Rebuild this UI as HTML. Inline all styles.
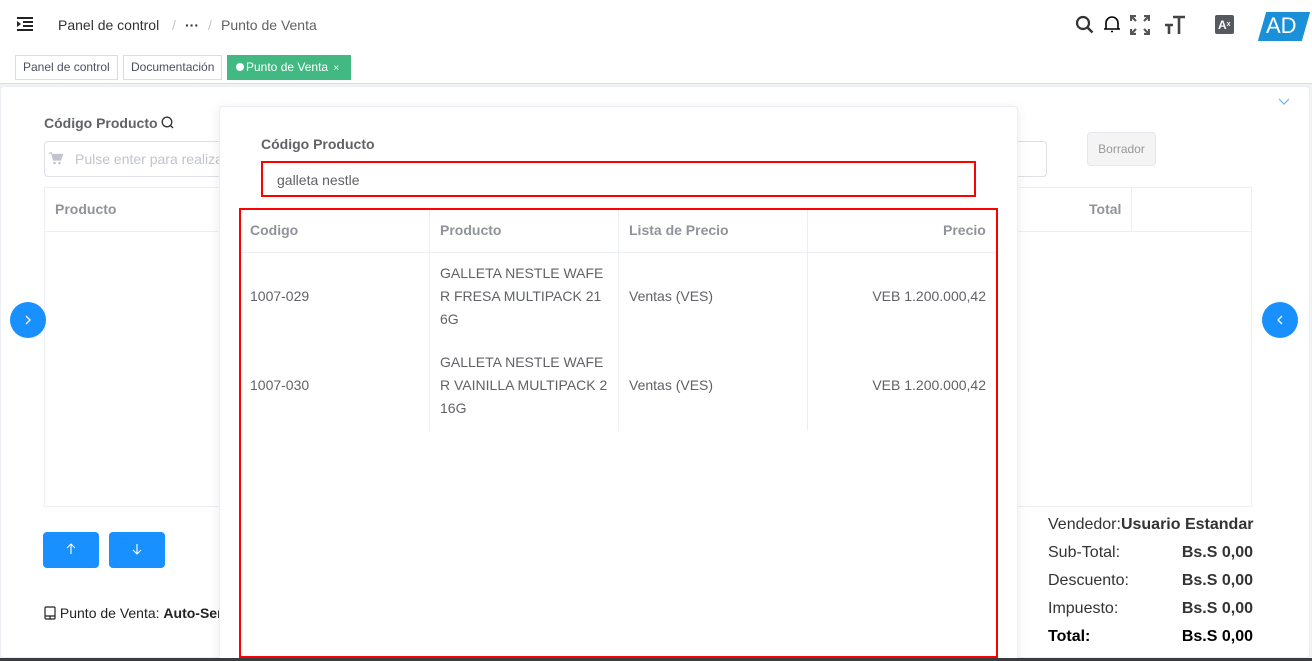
<!DOCTYPE html>
<html><head><meta charset="utf-8"><style>
*{box-sizing:border-box;margin:0;padding:0}
html,body{width:1312px;height:661px;overflow:hidden}
body{background:#f0f2f5;font-family:"Liberation Sans",sans-serif;color:#303133;position:relative}
.a{position:absolute}
.hdr{left:0;top:0;width:1312px;height:50px;background:#fff;box-shadow:0 1px 4px rgba(0,21,41,.08)}
.tags{left:0;top:50px;width:1312px;height:34px;background:#fff;border-bottom:1px solid #d8dce5}
.tag{top:55px;height:25px;border:1px solid #d8dce5;font-size:12px;line-height:23px;padding:0 7px;color:#495060;background:#fff}
.card{left:0;top:86px;width:1310px;height:572px;background:#fff;border:1px solid #ebeef5;border-radius:4px}
.th{font-weight:bold;color:#909399;font-size:14px}
.cell{font-size:14px;color:#606266;line-height:23px}
.vl{width:1px;background:#ebeef5}
.hl{height:1px;background:#ebeef5}
</style></head><body>
<div class="a hdr"></div>
<svg class="a" style="left:16px;top:16px" width="18" height="16" viewBox="0 0 18 16"><path d="M1 2h16M7 6h10M7 10h10M1 14h16" stroke="#222" stroke-width="2"/><path d="M1 5l4 3-4 3z" fill="#222"/></svg>
<div class="a" style="left:58px;top:17px;font-size:14px;color:#303133">Panel de control</div>
<div class="a" style="left:172px;top:17px;font-size:14px;color:#c0c4cc">/</div>
<div class="a" style="left:185px;top:17px;font-size:14px;font-weight:bold;color:#303133;line-height:16px">&middot;&middot;&middot;</div>
<div class="a" style="left:208px;top:17px;font-size:14px;color:#c0c4cc">/</div>
<div class="a" style="left:221px;top:17px;font-size:14px;color:#606266">Punto de Venta</div>
<svg class="a" style="left:1075px;top:15px" width="20" height="20" viewBox="0 0 20 20"><circle cx="8" cy="8" r="6" fill="none" stroke="#333" stroke-width="2.2"/><path d="M12.5 12.5l5 5" stroke="#333" stroke-width="2.5"/></svg>
<svg class="a" style="left:1103px;top:14px" width="18" height="20" viewBox="0 0 18 20"><path d="M3 15V9a6 6 0 0112 0v6zM1 15h16M8 17.5h2" fill="none" stroke="#000" stroke-width="1.6"/></svg>
<svg class="a" style="left:1130px;top:15px" width="20" height="20" viewBox="0 0 20 20" fill="none" stroke="#555" stroke-width="2.2"><path d="M1 6V1h5M1 1l5 5M19 6V1h-5M19 1l-5 5M1 14v5h5M1 19l5-5M19 14v5h-5M19 19l-5-5"/></svg>
<svg class="a" style="left:1164px;top:15px" width="22" height="20" viewBox="0 0 22 20"><path d="M9 2h12M15 2v17M1 10h8M5 10v9" stroke="#444" stroke-width="2.6"/></svg>
<div class="a" style="left:1215px;top:15px;width:19px;height:19px;background:#555a5f;border-radius:2px;color:#fff;font-size:12px;font-weight:bold;line-height:20px;padding-left:3px">A<span style="font-size:7px;vertical-align:top">x</span></div>
<div class="a" style="left:1262px;top:12px;width:44px;height:29px;background:#1a90d9;transform:skewX(-16deg)"></div>
<div class="a" style="left:1266px;top:13px;font-size:22px;color:#fff">AD</div>
<div class="a tags"></div>
<div class="a tag" style="left:15px">Panel de control</div>
<div class="a tag" style="left:123px">Documentación</div>
<div class="a tag" style="left:227px;width:124px;background:#42b983;border-color:#42b983;color:#fff;padding-left:8px"><span style="display:inline-block;width:8px;height:8px;border-radius:50%;background:#fff;margin-right:2px"></span>Punto de Venta <span style="font-size:10px;margin-left:2px">×</span></div>
<div class="a card"></div>
<svg class="a" style="left:1278px;top:98px" width="12" height="8" viewBox="0 0 12 8"><path d="M1 1l5 5 5-5" fill="none" stroke="#66b1ff" stroke-width="1.2"/></svg>
<div class="a" style="left:44px;top:115px;font-size:14px;font-weight:bold;color:#606266">Código Producto <svg width="13" height="13" viewBox="0 0 13 13" style="vertical-align:-1px"><circle cx="6" cy="6" r="4.8" fill="none" stroke="#333" stroke-width="1.3"/><path d="M9.5 9.5l2.5 2.5" stroke="#333" stroke-width="1.3"/></svg></div>
<div class="a" style="left:44px;top:141px;width:1003px;height:36px;border:1px solid #dcdfe6;border-radius:4px"></div>
<svg class="a" style="left:49px;top:152px" width="14" height="13" viewBox="0 0 14 13"><path d="M0 1h2.5l2 7h7l2-5.5H4" fill="#c0c4cc" stroke="#c0c4cc" stroke-width="1.2"/><circle cx="5.5" cy="11" r="1.3" fill="#c0c4cc"/><circle cx="10.5" cy="11" r="1.3" fill="#c0c4cc"/></svg>
<div class="a" style="left:75px;top:151px;font-size:14px;color:#c0c4cc">Pulse enter para realizar</div>
<div class="a" style="left:1087px;top:132px;width:69px;height:34px;border:1px solid #e4e7ed;border-radius:4px;background:#f4f4f5;color:#999;font-size:12px;line-height:32px;text-align:center">Borrador</div>
<div class="a" style="left:44px;top:187px;width:1208px;height:320px;border:1px solid #ebeef5"></div>
<div class="a hl" style="left:44px;top:231px;width:1208px"></div>
<div class="a vl" style="left:1131px;top:187px;height:44px"></div>
<div class="a th" style="left:55px;top:201px">Producto</div>
<div class="a th" style="left:1089px;top:201px">Total</div>
<div class="a" style="left:10px;top:302px;width:36px;height:36px;border-radius:50%;background:#1890ff"></div>
<svg class="a" style="left:23px;top:314px" width="10" height="12"><path d="M3 2l4 4-4 4" fill="none" stroke="#fff" stroke-width="1.3"/></svg>
<div class="a" style="left:1262px;top:302px;width:36px;height:36px;border-radius:50%;background:#1890ff"></div>
<svg class="a" style="left:1275px;top:314px" width="10" height="12"><path d="M7 2L3 6l4 4" fill="none" stroke="#fff" stroke-width="1.3"/></svg>
<div class="a" style="left:43px;top:532px;width:56px;height:36px;border-radius:4px;background:#1890ff"></div>
<svg class="a" style="left:65px;top:543px" width="12" height="12"><path d="M6 11V1M2 5l4-4 4 4" fill="none" stroke="#fff" stroke-width="1.1"/></svg>
<div class="a" style="left:109px;top:532px;width:56px;height:36px;border-radius:4px;background:#1890ff"></div>
<svg class="a" style="left:131px;top:543px" width="12" height="12"><path d="M6 1v10M2 7l4 4 4-4" fill="none" stroke="#fff" stroke-width="1.1"/></svg>
<div class="a" style="left:44px;top:605px;font-size:14px;color:#222;white-space:nowrap;width:175px;overflow:hidden"><svg width="12" height="14" viewBox="0 0 12 14" style="vertical-align:-2px"><rect x="1" y="1" width="10" height="12" rx="1" fill="none" stroke="#222" stroke-width="1.2"/><path d="M1 10h10M6 10v3" stroke="#222" stroke-width="1.2"/></svg> Punto de Venta: <b>Auto-Servicio</b></div>
<div class="a" style="left:1048px;top:511px;font-size:16px;color:#333;line-height:28px;width:205px;white-space:nowrap">
<div>Vendedor:<b>Usuario Estandar</b></div>
<div style="display:flex;justify-content:space-between"><span>Sub-Total:</span><b>Bs.S 0,00</b></div>
<div style="display:flex;justify-content:space-between"><span>Descuento:</span><b>Bs.S 0,00</b></div>
<div style="display:flex;justify-content:space-between"><span>Impuesto:</span><b>Bs.S 0,00</b></div>
<div style="display:flex;justify-content:space-between;color:#000"><b>Total:</b><b>Bs.S 0,00</b></div>
</div>
<!-- modal -->
<div class="a" style="left:219px;top:106px;width:799px;height:560px;background:#fff;border:1px solid #ebeef5;border-radius:4px;box-shadow:0 2px 12px rgba(0,0,0,.08)"></div>
<div class="a" style="left:261px;top:136px;font-size:14px;font-weight:bold;color:#606266">Código Producto</div>
<div class="a" style="left:261px;top:161px;width:715px;height:36px;border:2px solid #f00"></div>
<div class="a" style="left:277px;top:172px;font-size:14px;color:#606266">galleta nestle</div>
<div class="a" style="left:239px;top:208px;width:759px;height:450px;border:2px solid #f00"></div>
<div class="a hl" style="left:241px;top:252px;width:755px"></div>
<div class="a vl" style="left:429px;top:210px;height:221px"></div>
<div class="a vl" style="left:618px;top:210px;height:221px"></div>
<div class="a vl" style="left:807px;top:210px;height:221px"></div>
<div class="a th" style="left:250px;top:222px">Codigo</div>
<div class="a th" style="left:440px;top:222px">Producto</div>
<div class="a th" style="left:629px;top:222px">Lista de Precio</div>
<div class="a th" style="left:943px;top:222px">Precio</div>
<div class="a cell" style="left:250px;top:285px">1007-029</div>
<div class="a cell" style="left:440px;top:262px;width:170px">GALLETA NESTLE WAFE<br>R FRESA MULTIPACK 21<br>6G</div>
<div class="a cell" style="left:629px;top:285px">Ventas (VES)</div>
<div class="a cell" style="left:807px;top:285px;width:179px;text-align:right">VEB 1.200.000,42</div>
<div class="a cell" style="left:250px;top:374px">1007-030</div>
<div class="a cell" style="left:440px;top:351px;width:170px">GALLETA NESTLE WAFE<br>R VAINILLA MULTIPACK 2<br>16G</div>
<div class="a cell" style="left:629px;top:374px">Ventas (VES)</div>
<div class="a cell" style="left:807px;top:374px;width:179px;text-align:right">VEB 1.200.000,42</div>
<div class="a" style="left:0;top:658px;width:1312px;height:3px;background:#3a3d40"></div>
</body></html>
